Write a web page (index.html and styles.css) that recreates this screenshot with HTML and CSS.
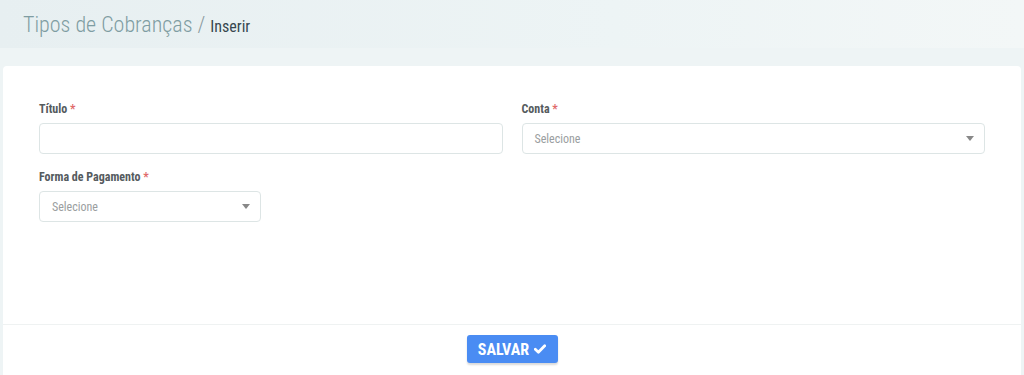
FILE: index.html
```html
<!DOCTYPE html>
<html lang="pt-BR">
<head>
<meta charset="utf-8">
<title>Tipos de Cobranças / Inserir</title>
<link rel="stylesheet" href="styles.css">
</head>
<body>
<header class="page-header">
  <h1 class="page-title">Tipos de Cobranças <span class="sep">/</span> <small class="sub">Inserir</small></h1>
</header>
<main class="card">
  <form class="card-body">
    <div class="grid">
      <div class="field span-2">
        <label class="label">Título <span class="req">*</span></label>
        <input class="control" type="text">
      </div>
      <div class="field span-2">
        <label class="label">Conta <span class="req">*</span></label>
        <div class="control select"><span class="placeholder">Selecione</span><span class="caret"></span></div>
      </div>
      <div class="field span-1">
        <label class="label">Forma de Pagamento <span class="req">*</span></label>
        <div class="control select"><span class="placeholder">Selecione</span><span class="caret"></span></div>
      </div>
    </div>
  </form>
  <div class="card-footer">
    <button class="btn" type="button">SALVAR
      <svg class="check" viewBox="0 0 12 10" width="12" height="10"><path d="M1.3 5.3 L4.4 8.2 L10.7 1.8" fill="none" stroke="#fff" stroke-width="2.8" stroke-linecap="round" stroke-linejoin="round"/></svg>
    </button>
  </div>
</main>
</body>
</html>
```
FILE: styles.css
```css
* { box-sizing: border-box; }
html, body { margin: 0; padding: 0; }
body {
  background: #eef4f5;
  font-family: "Roboto Condensed", "Liberation Sans Narrow", Roboto, "Liberation Sans", sans-serif;
  font-stretch: condensed;
  color: #4a4a4a;
  overflow: hidden;
}
.page-header {
  height: 48px;
  background: linear-gradient(90deg, #e7eff1 0%, #edf4f5 60%, #f3f7f7 100%);
  padding: 0 23px;
  display: flex;
  align-items: center;
}
.page-title {
  margin: 0;
  font-weight: 300;
  font-size: 22px;
  color: #7f9da2;
  line-height: 1;
  padding-top: 1px;
}
.page-title .sep { color: #8a9a9e; }
.page-title .sub {
  font-size: 16px;
  font-weight: 400;
  color: #37474f;
}
.card {
  margin: 18px 3px 0;
  background: #fff;
  border-radius: 4px 4px 0 0;
  min-height: 309px;
}
.card-body {
  padding: 35px 36px 0;
  min-height: 258px;
}
.grid {
  display: grid;
  grid-template-columns: repeat(4, 1fr);
  column-gap: 19px;
  row-gap: 15px;
}
.span-2 { grid-column: span 2; }
.span-1 { grid-column: span 1; }
.field { display: flex; flex-direction: column; }
.label {
  font-size: 12px;
  font-weight: 700;
  color: #555b5e;
  line-height: 16px;
  margin-bottom: 6px;
}
.req { color: #e06b6b; }
.control {
  height: 31px;
  border: 1px solid #dde5e5;
  border-radius: 4px;
  background: #fff;
  font: inherit;
  font-size: 12px;
  padding: 0 12px;
  outline: none;
  width: 100%;
}
.select {
  display: flex;
  align-items: center;
  justify-content: space-between;
  padding-right: 10px;
}
.placeholder { color: #9a9ea0; font-size: 12px; }
.caret {
  width: 0; height: 0;
  border-left: 4px solid transparent;
  border-right: 4px solid transparent;
  border-top: 5px solid #888;
}
.card-footer {
  border-top: 1px solid #eff2f2;
  padding-top: 10px;
  display: flex;
  justify-content: center;
}
.btn {
  height: 28px;
  width: 91px;
  border: none;
  border-radius: 3px;
  background: #4a8cf3;
  color: #fff;
  font: inherit;
  font-size: 16px;
  font-weight: 700;
  display: flex;
  align-items: center;
  justify-content: center;
  gap: 5px;
  box-shadow: 0 2px 2px rgba(0,0,0,0.15);
  padding: 0;
}
.check { display: block; }
```
